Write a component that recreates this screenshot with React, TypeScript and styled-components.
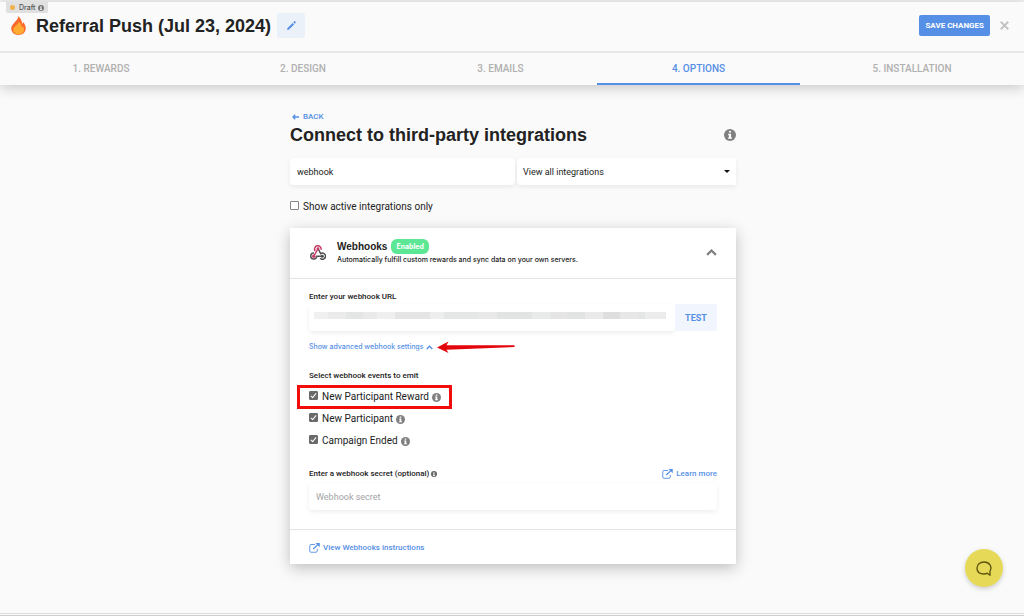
import React, { useState } from 'react';
import styled, { createGlobalStyle } from 'styled-components';

const blue = '#568fe6';
const line = '#e4e4e4';
const uiFont = '"Roboto", "Liberation Sans", sans-serif';
const headingFont = '"Liberation Sans", Arial, sans-serif';
const fineFont = '"Inter", "Liberation Sans", sans-serif';

const GlobalStyle = createGlobalStyle`
  *, *::before, *::after { box-sizing: border-box; }
  body { margin: 0; background: #fafafa; color: #222; font: 10px/14px ${uiFont}; }
  h1, h2, h3, p, fieldset, legend, ul { margin: 0; padding: 0; border: 0; }
  button, input, select { font: inherit; color: inherit; margin: 0; border: 0; }
  button { cursor: pointer; }
  a { color: ${blue}; text-decoration: none; }
  svg { display: block; flex: none; }
`;

const Page = styled.div`
  display: flex;
  flex-direction: column;
  min-height: 100vh;
  border-top: 2px solid #efefef;
`;

const Header = styled.header`
  position: relative;
  background: #fafafa;
  box-shadow: 0 3px 12px rgba(0, 0, 0, 0.2);
`;

const TitleBar = styled.div`
  display: flex;
  align-items: center;
  height: 49px;
  padding: 0 14px 2px 11px;
`;

const DraftBadge = styled.span`
  position: absolute;
  top: 0;
  left: 6px;
  display: flex;
  align-items: center;
  gap: 2px;
  height: 11px;
  padding: 0 4px;
  border-radius: 0 0 2px 2px;
  background: #e0e0e0;
  color: #555;
  font: 500 7px/11px ${fineFont};
`;

const Dot = styled.i`
  width: 5px;
  height: 5px;
  margin-right: 2px;
  border-radius: 50%;
  background: #f0b04c;
`;

const Title = styled.h1`
  margin: 0 6px 0 10px;
  font: 700 18px/24px ${headingFont};
`;

const EditButton = styled.button`
  display: grid;
  place-items: center;
  width: 28px;
  height: 25px;
  padding: 0;
  border-radius: 2px;
  background: #ebf1f9;
`;

const SaveButton = styled.button`
  margin-left: auto;
  padding: 4px 6px 3px;
  border-radius: 2px;
  background: ${blue};
  color: #fff;
  font-size: 8px;
  font-weight: 700;
`;

const CloseButton = styled.button`
  margin-left: 9px;
  padding: 1px;
  background: none;
`;

const Tabs = styled.nav`
  display: grid;
  grid-template-columns: 202fr 202fr 193fr 203fr 224fr;
  border-top: 2px solid #e8e8e8;
`;

const Tab = styled.a<{ $active?: boolean }>`
  padding: 9px 0 7px;
  border-bottom: 2px solid ${(p) => (p.$active ? blue : 'transparent')};
  color: ${(p) => (p.$active ? blue : '#b0b0b0')};
  font: 500 10px/14px ${uiFont};
  text-align: center;
`;

const Main = styled.main`
  flex: 1;
  width: 100%;
  max-width: 448px;
  margin: 0 auto;
  padding: 25px 0 48px 2px;
`;

const Back = styled.a`
  display: inline-flex;
  align-items: center;
  gap: 4px;
  padding-left: 2px;
  font: 500 8px/14px ${uiFont};
`;

const HeadingRow = styled.div`
  display: flex;
  align-items: center;
  justify-content: space-between;
`;

const Heading = styled.h2`
  font: 700 18px/22px ${headingFont};
`;

const Filters = styled.div`
  display: grid;
  grid-template-columns: 225fr 219fr;
  gap: 2px;
  margin-top: 12px;
`;

const TextField = styled.input`
  width: 100%;
  min-width: 0;
  height: 27px;
  padding: 0 7px;
  border-radius: 4px;
  background: #fff;
  box-shadow: 0 2px 5px rgba(0, 0, 0, 0.07);
  font-size: 9px;
  &::placeholder { color: #a4a4a4; opacity: 1; }
`;

const SelectWrap = styled.div`
  display: grid;
  align-items: center;
  > * { grid-area: 1 / 1; }
  > svg { justify-self: end; margin-right: 6px; pointer-events: none; }
`;

const Select = styled.select`
  appearance: none;
  width: 100%;
  height: 27px;
  padding: 0 6px;
  border-radius: 4px 0 0 4px;
  background: #fff;
  box-shadow: 0 2px 5px rgba(0, 0, 0, 0.07);
  font: 9px/14px ${uiFont};
`;

const CheckLabel = styled.label`
  display: flex;
  align-items: center;
  gap: 4px;
  color: #222;
  font-size: 10px;
  line-height: 14px;
`;

const ActiveOnly = styled(CheckLabel)`
  margin-top: 15px;
`;

const Check = styled.input.attrs({ type: 'checkbox' })`
  appearance: none;
  display: grid;
  place-items: center;
  flex: none;
  width: 9px;
  height: 9px;
  margin: 0 0 3px;
  border: 1px solid #858585;
  border-radius: 1px;
  background: #fff;
  &:checked { border-color: #6a6a6a; background: #6a6a6a; }
  &:checked::after {
    content: '';
    width: 3px;
    height: 6px;
    margin-bottom: 1px;
    border: solid #fff;
    border-width: 0 1px 1px 0;
    rotate: 40deg;
  }
`;

const Card = styled.section`
  margin-top: 14px;
  background: #fff;
  box-shadow: 0 4px 14px rgba(0, 0, 0, 0.24);
`;

const CardHeader = styled.header`
  display: flex;
  align-items: center;
  gap: 11px;
  height: 51px;
  padding: 0 19px 1px 20px;
  border-bottom: 1px solid ${line};
`;

const CardTitle = styled.h3`
  display: flex;
  align-items: center;
  gap: 4px;
  font: 700 10px/15px ${headingFont};
`;

const Enabled = styled.span`
  padding: 0 5px;
  border-radius: 6px;
  background: #5ce795;
  color: #fff;
  font: 700 7px/15px ${fineFont};
`;

const Description = styled.p`
  font: 500 7px/12px ${fineFont};
`;

const ToggleButton = styled.button`
  margin-left: auto;
  padding: 0;
  background: none;
`;

const CardBody = styled.div`
  padding: 11px 19px 19px;
`;

const FieldLabel = styled.label`
  display: flex;
  align-items: center;
  gap: 2px;
  font: 500 8px/14px ${uiFont};
`;

const UrlRow = styled.div`
  display: flex;
`;

const UrlField = styled.div`
  display: grid;
  flex: 1;
  align-items: center;
  > * { grid-area: 1 / 1; }
`;

const Redaction = styled.div`
  height: 7px;
  margin: 0 9px 5px 5px;
  background: linear-gradient(90deg,
    #f0f0f0 0 4%, #ebebeb 4% 9%, #e4e5e5 9% 14%, #eaeaea 14% 18%, #efeff0 18% 23%,
    #e5e5e5 23% 33%, #eeeeee 33% 37%, #e5e6e6 37% 47%, #e9e9e9 47% 52%, #e1e4e3 52% 62%,
    #e9eaea 62% 67%, #e5e5e5 67% 72%, #e2e3e3 72% 77%, #eaeaea 77% 82%, #dededf 82% 87%,
    #e7e7e7 87% 92%, #e4e5e5 92% 94%, #ececec 94%);
`;

const TestButton = styled.button`
  width: 42px;
  border-radius: 2px;
  background: #f0f5fe;
  color: ${blue};
  font: 700 9px/14px ${uiFont};
`;

const AdvancedRow = styled.div`
  display: flex;
  align-items: center;
  gap: 4px;
  margin-top: 9px;
`;

const AdvancedButton = styled.button`
  display: flex;
  align-items: center;
  gap: 3px;
  padding: 0;
  background: none;
  color: ${blue};
  font: 500 7px/14px ${fineFont};
`;

const Events = styled.fieldset`
  min-width: 0;
  margin-top: 15px;
`;

const EventsLegend = styled.legend`
  font: 500 8px/14px ${uiFont};
`;

const EventRow = styled.div<{ $marked?: boolean }>`
  display: flex;
  align-items: center;
  gap: 3px;
  width: max-content;
  height: 16px;
  margin: 6px 0 0 -8px;
  padding: 0 7px 0 8px;
  outline: ${(p) => (p.$marked ? '3px solid #f20d0d' : 'none')};
  outline-offset: 1px;
`;

const SecretHead = styled.div`
  display: flex;
  justify-content: space-between;
  margin: 18px 0 2px;
`;

const IconLink = styled.a`
  display: inline-flex;
  align-items: center;
  gap: 3px;
  font: 500 8px/14px ${uiFont};
`;

const CardFooter = styled.footer`
  display: flex;
  padding: 11px 19px 9px;
  border-top: 1px solid ${line};
`;

const BottomBar = styled.footer`
  height: 3px;
  border-top: 1px solid #dcdcdc;
  border-bottom: 1px solid #cfcfcf;
`;

const ChatButton = styled.button`
  position: fixed;
  right: 21px;
  bottom: 29px;
  display: grid;
  place-items: center;
  width: 38px;
  height: 38px;
  padding: 0;
  border-radius: 50%;
  background: #e6d957;
  box-shadow: 0 2px 5px rgba(0, 0, 0, 0.18);
`;

const Info = ({ size = 9, color = '#808080' }: { size?: number; color?: string }) => (
  <svg width={size} height={size} viewBox="0 0 16 16" aria-hidden="true">
    <circle cx="8" cy="8" r="8" fill={color} />
    <path d="M6.6 2.6h2.8v2.2H6.6zM5.6 6.2h3.8v5h1.2v1.9H5.4v-1.9h1.2v-3h-1z" fill="#fff" />
  </svg>
);

const Chevron = ({ size, color, weight }: { size: number; color: string; weight: number }) => (
  <svg width={size} height={size} viewBox="0 0 12 12" aria-hidden="true">
    <path d="M1.2 8.600 6 3.800l4.800 4.800" fill="none" stroke={color} strokeWidth={weight} />
  </svg>
);

const External = () => (
  <svg width="11" height="10" viewBox="0 0 22 20" fill="none" stroke={blue} aria-hidden="true">
    <path d="M12 3H4A2.500 2.500 0 0 0 1.500 5.500V16A2.500 2.500 0 0 0 4 18.500h10a2.500 2.500 0 0 0 2.500-2.500v-4.500" strokeWidth="1.800" />
    <path d="M8.500 12 18 2.800" strokeWidth="2.600" />
    <path d="M13 0H21.500V8.500z" fill={blue} stroke="none" />
  </svg>
);

const Flame = () => (
  <svg width="15" height="19" viewBox="0 0 30 38" aria-hidden="true">
    <path d="M14.500 0C15 6 9 10 5 15.500 2 19 .5 21 .5 25 .5 32.500 7 38 15 38s14.500-5.500 14.500-13c0-5-2-9-5-13-.5 2-1 3-2 3.500C22 10 19 4 14.500 0z" fill="#fb6a2c" />
    <path d="M15 11.500c.5 4-4 6.500-7 9.500-2 2-3.500 4-3.500 7C4.500 33 9 36.500 15 36.500S26 33 26 27.500c0-3-1-5-2.500-7-.5 1.500-1.500 2-2.500 2 .5-4.500-2-9-6-11z" fill="#fdac33" />
  </svg>
);

const WebhookLogo = () => (
  <svg width="16" height="15" viewBox="0 0 32 30" fill="none" strokeWidth="3" aria-hidden="true">
    <path d="M10.500 12A6.500 6.500 0 1 1 22 9.500M15.500 8 8.500 21" stroke="#c73a63" />
    <path d="M8 16A6 6 0 1 0 13.500 22.500H24" stroke="#555" />
    <path d="M16.500 8 21.500 17.500A6 6 0 1 1 20.500 26.500" stroke="#4b4b4b" />
    <circle cx="16" cy="7.500" r="2.800" fill="#c73a63" />
    <circle cx="7.500" cy="22.500" r="3.400" fill="#c73a63" />
    <circle cx="24.500" cy="22.500" r="3" fill="#4b4b4b" />
  </svg>
);

const Arrow = () => (
  <svg width="78" height="12" viewBox="0 0 78 12" aria-hidden="true">
    <path d="M0 6.500 11.500 .5 9.500 4.300 77.500 4.300v1.700L9.500 8.700l2 3.300z" fill="#e3060c" />
  </svg>
);

const tabs = ['1. REWARDS', '2. DESIGN', '3. EMAILS', '4. OPTIONS', '5. INSTALLATION'];
const events = ['New Participant Reward', 'New Participant', 'Campaign Ended'];

export default function App() {
  const [query, setQuery] = useState('webhook');
  return (
    <Page>
      <GlobalStyle />
      <Header>
        <DraftBadge><Dot />Draft<Info size={6} color="#777" /></DraftBadge>
        <TitleBar>
          <Flame />
          <Title>Referral Push (Jul 23, 2024)</Title>
          <EditButton aria-label="Edit campaign name">
            <svg width="9" height="9" viewBox="0 0 20 20" fill={blue} aria-hidden="true">
              <path d="M0 20l1.200-4.500L12.500 4.200l3.300 3.300L4.500 18.800zM13.800 3l2.200-2.300a1.500 1.500 0 0 1 2 0l1.300 1.300a1.500 1.500 0 0 1 0 2L17 6.300z" />
            </svg>
          </EditButton>
          <SaveButton>SAVE CHANGES</SaveButton>
          <CloseButton aria-label="Close">
            <svg width="9" height="9" viewBox="0 0 18 18" stroke="#c2c2c2" strokeWidth="3.600" aria-hidden="true">
              <path d="M1.500 1.500l15 15M16.500 1.500l-15 15" />
            </svg>
          </CloseButton>
        </TitleBar>
        <Tabs>
          {tabs.map((t, i) => (
            <Tab key={t} href="#" $active={i === 3}>{t}</Tab>
          ))}
        </Tabs>
      </Header>

      <Main>
        <Back href="#">
          <svg width="7" height="6" viewBox="0 0 14 12" fill="none" stroke={blue} strokeWidth="2.600" aria-hidden="true">
            <path d="M14 6H2M6.500 1.500 2 6l4.500 4.500" />
          </svg>
          BACK
        </Back>
        <HeadingRow>
          <Heading>Connect to third-party integrations</Heading>
          <Info size={12} />
        </HeadingRow>
        <Filters>
          <TextField aria-label="Search integrations" value={query} onChange={(e) => setQuery(e.target.value)} />
          <SelectWrap>
            <Select aria-label="Filter integrations">
              <option>View all integrations</option>
            </Select>
            <svg width="6" height="3" viewBox="0 0 6 3" aria-hidden="true"><path d="M0 0h6L3 3z" fill="#111" /></svg>
          </SelectWrap>
        </Filters>
        <ActiveOnly><Check />Show active integrations only</ActiveOnly>

        <Card>
          <CardHeader>
            <WebhookLogo />
            <div>
              <CardTitle>Webhooks<Enabled>Enabled</Enabled></CardTitle>
              <Description>Automatically fulfill custom rewards and sync data on your own servers.</Description>
            </div>
            <ToggleButton aria-label="Collapse Webhooks"><Chevron size={11} color="#808080" weight={2.4} /></ToggleButton>
          </CardHeader>
          <CardBody>
            <FieldLabel htmlFor="url">Enter your webhook URL</FieldLabel>
            <UrlRow>
              <UrlField>
                <TextField id="url" />
                <Redaction />
              </UrlField>
              <TestButton>TEST</TestButton>
            </UrlRow>
            <AdvancedRow>
              <AdvancedButton>
                Show advanced webhook settings
                <Chevron size={7} color={blue} weight={2.4} />
              </AdvancedButton>
              <Arrow />
            </AdvancedRow>
            <Events>
              <EventsLegend>Select webhook events to emit</EventsLegend>
              {events.map((name, i) => (
                <EventRow key={name} $marked={i === 0}>
                  <CheckLabel><Check defaultChecked />{name}</CheckLabel>
                  <Info />
                </EventRow>
              ))}
            </Events>
            <SecretHead>
              <FieldLabel htmlFor="secret">Enter a webhook secret (optional)<Info size={6} color="#666" /></FieldLabel>
              <IconLink href="#"><External />Learn more</IconLink>
            </SecretHead>
            <TextField id="secret" placeholder="Webhook secret" />
          </CardBody>
          <CardFooter>
            <IconLink href="#"><External />View Webhooks instructions</IconLink>
          </CardFooter>
        </Card>
      </Main>
      <BottomBar />
      <ChatButton aria-label="Open chat">
        <svg width="16" height="15" viewBox="0 0 32 30" fill="none" stroke="#5f570f" strokeWidth="2.800" aria-hidden="true">
          <path d="M28 28.500V20.500C33 11 27 2 16 2 7.500 2 2 7.500 2 14.500S7.500 26 16 26c2.500 0 4.500-.5 6.500-1.500z" strokeLinejoin="round" />
        </svg>
      </ChatButton>
    </Page>
  );
}
